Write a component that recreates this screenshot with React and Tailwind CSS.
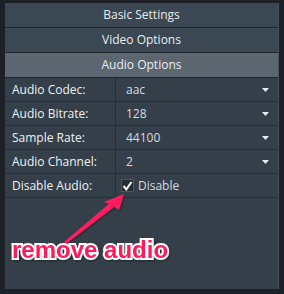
import React from 'react';

const headers = [
  { label: 'Basic Settings', active: false },
  { label: 'Video Options', active: false },
  { label: 'Audio Options', active: true },
];

const rows = [
  { label: 'Audio Codec:', value: 'aac' },
  { label: 'Audio Bitrate:', value: '128' },
  { label: 'Sample Rate:', value: '44100' },
  { label: 'Audio Channel:', value: '2' },
];

const Caret = () => (
  <svg width="7" height="4" viewBox="0 0 7 4" className="mr-[9px]">
    <path d="M0 0 H7 L3.5 4 Z" fill="#e6eaee" />
  </svg>
);

export default function App() {
  return (
    <div className="relative w-[284px] h-[294px] bg-[#1b2127] pt-[3px] pl-[5px] pr-[5px] pb-[5px] font-['Open_Sans',sans-serif] text-[12px] overflow-hidden">
      <div className="h-full bg-[#353f49] border-r border-[#46515b] flex flex-col">
        {headers.map((h) => (
          <div
            key={h.label}
            className={`h-[25px] shrink-0 flex items-center justify-center border-b border-[#1f262c] text-[#e9edf0] ${h.active ? 'bg-[#5c6670]' : 'bg-[#3b4753]'}`}
          >
            {h.label}
          </div>
        ))}
        {rows.map((r) => (
          <div key={r.label} className="h-[24px] shrink-0 flex border-b border-[#262e35] text-[#eef1f3]">
            <div className="w-[111px] border-r border-[#262e35] flex items-center pl-[7px]">{r.label}</div>
            <div className="flex-1 flex items-center justify-between pl-[10px] text-[#d5dbe0]">
              <span>{r.value}</span>
              <Caret />
            </div>
          </div>
        ))}
        <div className="h-[24px] shrink-0 flex border-b border-[#262e35] text-[#eef1f3]">
          <div className="w-[111px] border-r border-[#262e35] flex items-center pl-[7px]">Disable Audio:</div>
          <div className="flex-1 flex items-center pl-[5px] gap-[4px] text-[#d5dbe0]">
            <div className="w-[13px] h-[13px] border border-[#4b5560] bg-[#262e35] flex items-center justify-center">
              <svg width="11" height="10" viewBox="0 0 11 10">
                <path d="M1.5 5 L4.3 8.3 L9.5 1" stroke="#ffffff" strokeWidth="2" fill="none" />
              </svg>
            </div>
            <span>Disable</span>
          </div>
        </div>
      </div>

      <svg className="absolute left-0 top-0" width="284" height="294" viewBox="0 0 284 294">
        <defs>
          <filter id="sh" x="-20%" y="-20%" width="140%" height="140%">
            <feDropShadow dx="1" dy="1" stdDeviation="1" floodColor="#000" floodOpacity="0.4" />
          </filter>
        </defs>
        <g filter="url(#sh)" fill="#ff1f5e">
          <path d="M64 242 L66 244 L114 207 L110 203 Z" />
          <path d="M124 194 L119 210 L112 205 L104 202 Z" />
        </g>
      </svg>

      <div
        className="absolute left-[12px] top-[238px] font-['Liberation_Sans',Arial,sans-serif] font-bold text-[24px] leading-none text-[#ff1a5c] [paint-order:stroke_fill] [-webkit-text-stroke:4px_#ffffff] drop-shadow-[1px_1px_1px_rgba(0,0,0,0.4)]"
      >
        remove audio
      </div>
    </div>
  );
}
